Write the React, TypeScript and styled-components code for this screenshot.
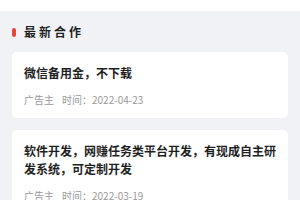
import React from "react";
import styled, { createGlobalStyle } from "styled-components";

const Global = createGlobalStyle`
  html, body { margin: 0; padding: 0; background: #f1f2f6; }
  body { font-family: "Noto Sans CJK SC", "Liberation Sans", sans-serif; }
  * { box-sizing: border-box; }
`;

const Page = styled.div`
  width: 300px;
  min-height: 200px;
  background: #f1f2f6;
`;

const TopBand = styled.div`
  height: 11px;
  background: #ffffff;
`;

const Section = styled.section`
  padding: 12px 12px 0;
  display: flex;
  flex-direction: column;
`;

const Heading = styled.div`
  display: flex;
  align-items: center;
  gap: 8px;
  height: 18px;
  margin-bottom: 11px;
`;

const Mark = styled.span`
  width: 4px;
  height: 9px;
  border-radius: 2px;
  background: #e5483d;
`;

const HeadingText = styled.h2`
  margin: 0;
  font-size: 12px;
  line-height: 18px;
  font-weight: 700;
  letter-spacing: 3px;
  color: #1f1f1f;
`;

const Card = styled.article`
  background: #ffffff;
  border-radius: 5px;
  padding: 12px 12px 10px;
  margin-bottom: 12px;
`;

const CardTitle = styled.h3`
  margin: 0 0 10px;
  font-size: 12px;
  line-height: 18px;
  font-weight: 700;
  color: #1f1f1f;
`;

const Meta = styled.div`
  display: flex;
  gap: 8px;
  font-size: 10px;
  line-height: 16px;
  color: #9a9a9a;
`;

const items = [
  { title: "微信备用金，不下载", date: "2022-04-23" },
  {
    title: "软件开发，网赚任务类平台开发，有现成自主研发系统，可定制开发",
    date: "2022-03-19",
  },
];

export default function App() {
  return (
    <Page>
      <Global />
      <TopBand />
      <Section>
        <Heading>
          <Mark />
          <HeadingText>最新合作</HeadingText>
        </Heading>
        {items.map((it) => (
          <Card key={it.date}>
            <CardTitle>{it.title}</CardTitle>
            <Meta>
              <span>广告主</span>
              <span>时间：{it.date}</span>
            </Meta>
          </Card>
        ))}
      </Section>
    </Page>
  );
}
